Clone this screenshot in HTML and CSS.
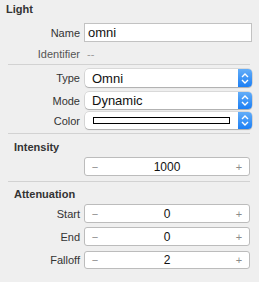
FILE: index.html
```html
<!DOCTYPE html>
<html>
<head>
<meta charset="utf-8">
<link rel="stylesheet" href="styles.css">
</head>
<body>
<div class="panel">
  <div class="head head-first">Light</div>
  <div class="row r-name">
    <div class="label">Name</div>
    <div class="field">omni</div>
  </div>
  <div class="row r-ident">
    <div class="label">Identifier</div>
    <div class="plain">--</div>
  </div>
  <div class="sep s1"></div>
  <div class="row r-type">
    <div class="label">Type</div>
    <div class="popup"><span class="ptext">Omni</span><span class="arrows"><svg width="8" height="11" viewBox="0 0 8 11"><path d="M1 4 L4 1 L7 4 M1 7 L4 10 L7 7" fill="none" stroke="#fff" stroke-width="1.4"/></svg></span></div>
  </div>
  <div class="row r-mode">
    <div class="label">Mode</div>
    <div class="popup"><span class="ptext">Dynamic</span><span class="arrows"><svg width="8" height="11" viewBox="0 0 8 11"><path d="M1 4 L4 1 L7 4 M1 7 L4 10 L7 7" fill="none" stroke="#fff" stroke-width="1.4"/></svg></span></div>
  </div>
  <div class="row r-color">
    <div class="label">Color</div>
    <div class="popup"><span class="ptext"><span class="well"></span></span><span class="arrows"><svg width="8" height="11" viewBox="0 0 8 11"><path d="M1 4 L4 1 L7 4 M1 7 L4 10 L7 7" fill="none" stroke="#fff" stroke-width="1.4"/></svg></span></div>
  </div>
  <div class="sep s2"></div>
  <div class="head head-sub h-int">Intensity</div>
  <div class="row r-int">
    <div class="label"></div>
    <div class="stepper"><span class="minus">−</span><span class="val">1000</span><span class="plus">+</span></div>
  </div>
  <div class="sep s3"></div>
  <div class="head head-sub h-att">Attenuation</div>
  <div class="row r-start">
    <div class="label">Start</div>
    <div class="stepper"><span class="minus">−</span><span class="val">0</span><span class="plus">+</span></div>
  </div>
  <div class="row r-end">
    <div class="label">End</div>
    <div class="stepper"><span class="minus">−</span><span class="val">0</span><span class="plus">+</span></div>
  </div>
  <div class="row r-fall">
    <div class="label">Falloff</div>
    <div class="stepper"><span class="minus">−</span><span class="val">2</span><span class="plus">+</span></div>
  </div>
</div>
</body>
</html>
```
FILE: styles.css
```css
html, body {
  margin: 0;
  padding: 0;
  background: #efefef;
}
body {
  width: 259px;
  height: 282px;
  overflow: hidden;
  font-family: "Liberation Sans", Arial, sans-serif;
  color: #2b2b2b;
}
.panel {
  display: flex;
  flex-direction: column;
}
.head {
  font-weight: bold;
  font-size: 11px;
  line-height: 12px;
  height: 12px;
  color: #333;
}
.head-first { margin-top: 3px; padding-left: 6px; }
.head-sub { padding-left: 14px; }
.h-int { margin-top: 7px; }
.h-att { margin-top: 6px; }
.row {
  display: flex;
  align-items: center;
}
.label {
  width: 80px;
  flex: none;
  text-align: right;
  font-size: 11px;
  color: #333;
  margin-right: 4px;
}
.r-name { margin-top: 8px; height: 19px; }
.r-ident { margin-top: 2px; height: 19px; }
.r-ident .label { color: #555; }
.plain { color: #9a9a9a; font-size: 11px; padding-left: 3px; }
.field {
  width: 168px;
  height: 19px;
  box-sizing: border-box;
  background: #fff;
  border: 1px solid #c2c2c2;
  font-size: 13px;
  line-height: 17px;
  padding-left: 3px;
  color: #111;
}
.sep {
  height: 1px;
  background: #d2d2d2;
  margin-left: 8px;
  width: 242px;
}
.s1 { margin-top: 1px; }
.s2 { margin-top: 4px; }
.s3 { margin-top: 5px; }
.r-type { margin-top: 4px; height: 18px; }
.r-mode { margin-top: 5px; height: 17px; }
.r-color { margin-top: 3px; height: 17px; }
.popup {
  display: flex;
  width: 167px;
  height: 100%;
  margin-left: 1px;
  box-sizing: border-box;
  background: #fff;
  border-radius: 4px;
  box-shadow: 0 0 0 0.5px rgba(0,0,0,0.18), 0 1px 1px rgba(0,0,0,0.2);
  overflow: hidden;
}
.ptext {
  flex: 1;
  display: flex;
  align-items: center;
  font-size: 13px;
  padding-left: 7px;
  color: #111;
}
.arrows {
  width: 14px;
  flex: none;
  display: flex;
  align-items: center;
  justify-content: center;
  background: linear-gradient(#63adf8, #1c7ff5);
}
.well {
  display: block;
  width: 137px;
  height: 7px;
  box-sizing: border-box;
  border: 1px solid #000;
  background: #fff;
  margin-left: 1px;
}
.r-int { margin-top: 4px; height: 19px; }
.r-start { margin-top: 4px; height: 19px; }
.r-end { margin-top: 4px; height: 19px; }
.r-fall { margin-top: 5px; height: 18px; }
.stepper {
  display: flex;
  align-items: center;
  width: 166px;
  height: 100%;
  box-sizing: border-box;
  background: #fff;
  border: 1px solid #bcbcbc;
  border-radius: 3px;
  color: #111;
}
.minus, .plus {
  width: 16px;
  flex: none;
  font-size: 11px;
  color: #8a8a8a;
  text-align: center;
}
.minus { margin-left: 2px; }
.plus { margin-right: 2px; }
.val {
  flex: 1;
  text-align: center;
  font-size: 12px;
}
```
